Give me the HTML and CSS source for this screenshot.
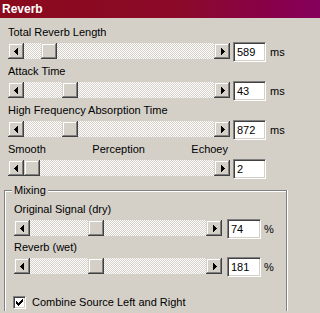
FILE: index.html
```html
<!DOCTYPE html>
<html>
<head>
<meta charset="utf-8">
<link rel="stylesheet" href="styles.css">
</head>
<body>
<div class="titlebar"><span class="title">Reverb</span></div>
<div class="main">
  <div class="row">
    <div class="label">Total Reverb Length</div>
    <div class="ctrl">
      <div class="scroll">
        <div class="btn btn-left"><svg width="4" height="7" viewBox="0 0 4 7"><path d="M3 0h1v7h-1v-1h-1v-1h-1v-1h-1v-1h1v-1h1v-1h1z"/></svg></div>
        <div class="track"><div class="thumb" style="margin-left:17px"></div></div>
        <div class="btn btn-right"><svg width="4" height="7" viewBox="0 0 4 7"><path d="M0 0h1v1h1v1h1v1h1v1h-1v1h-1v1h-1v1h-1z"/></svg></div>
      </div>
      <div class="edit">589</div>
      <div class="unit">ms</div>
    </div>
  </div>
  <div class="row">
    <div class="label">Attack Time</div>
    <div class="ctrl">
      <div class="scroll">
        <div class="btn btn-left"><svg width="4" height="7" viewBox="0 0 4 7"><path d="M3 0h1v7h-1v-1h-1v-1h-1v-1h-1v-1h1v-1h1v-1h1z"/></svg></div>
        <div class="track"><div class="thumb" style="margin-left:38px"></div></div>
        <div class="btn btn-right"><svg width="4" height="7" viewBox="0 0 4 7"><path d="M0 0h1v1h1v1h1v1h1v1h-1v1h-1v1h-1v1h-1z"/></svg></div>
      </div>
      <div class="edit">43</div>
      <div class="unit">ms</div>
    </div>
  </div>
  <div class="row">
    <div class="label">High Frequency Absorption Time</div>
    <div class="ctrl">
      <div class="scroll">
        <div class="btn btn-left"><svg width="4" height="7" viewBox="0 0 4 7"><path d="M3 0h1v7h-1v-1h-1v-1h-1v-1h-1v-1h1v-1h1v-1h1z"/></svg></div>
        <div class="track"><div class="thumb" style="margin-left:38px"></div></div>
        <div class="btn btn-right"><svg width="4" height="7" viewBox="0 0 4 7"><path d="M0 0h1v1h1v1h1v1h1v1h-1v1h-1v1h-1v1h-1z"/></svg></div>
      </div>
      <div class="edit">872</div>
      <div class="unit">ms</div>
    </div>
  </div>
  <div class="row">
    <div class="label ticks"><span>Smooth</span><span>Perception</span><span>Echoey</span></div>
    <div class="ctrl">
      <div class="scroll">
        <div class="btn btn-left"><svg width="4" height="7" viewBox="0 0 4 7"><path d="M3 0h1v7h-1v-1h-1v-1h-1v-1h-1v-1h1v-1h1v-1h1z"/></svg></div>
        <div class="track"><div class="thumb" style="margin-left:0px"></div></div>
        <div class="btn btn-right"><svg width="4" height="7" viewBox="0 0 4 7"><path d="M0 0h1v1h1v1h1v1h1v1h-1v1h-1v1h-1v1h-1z"/></svg></div>
      </div>
      <div class="edit">2</div>
    </div>
  </div>

  <div class="group">
    <div class="legend">Mixing</div>
    <div class="grow first">
      <div class="label">Original Signal (dry)</div>
      <div class="ctrl">
        <div class="scroll">
          <div class="btn btn-left"><svg width="4" height="7" viewBox="0 0 4 7"><path d="M3 0h1v7h-1v-1h-1v-1h-1v-1h-1v-1h1v-1h1v-1h1z"/></svg></div>
          <div class="track"><div class="thumb" style="margin-left:58px"></div></div>
          <div class="btn btn-right"><svg width="4" height="7" viewBox="0 0 4 7"><path d="M0 0h1v1h1v1h1v1h1v1h-1v1h-1v1h-1v1h-1z"/></svg></div>
        </div>
        <div class="edit">74</div>
        <div class="unit">%</div>
      </div>
    </div>
    <div class="grow">
      <div class="label">Reverb (wet)</div>
      <div class="ctrl">
        <div class="scroll">
          <div class="btn btn-left"><svg width="4" height="7" viewBox="0 0 4 7"><path d="M3 0h1v7h-1v-1h-1v-1h-1v-1h-1v-1h1v-1h1v-1h1z"/></svg></div>
          <div class="track"><div class="thumb" style="margin-left:58px"></div></div>
          <div class="btn btn-right"><svg width="4" height="7" viewBox="0 0 4 7"><path d="M0 0h1v1h1v1h1v1h1v1h-1v1h-1v1h-1v1h-1z"/></svg></div>
        </div>
        <div class="edit">181</div>
        <div class="unit">%</div>
      </div>
    </div>
    <div class="check">
      <div class="box"><svg width="7" height="7" viewBox="0 0 7 7"><path d="M6 0h1v1h-1zM5 1h2v1h-2zM0 2h1v1h-1zM4 2h3v1h-3zM0 3h2v1h-2zM3 3h3v1h-3zM0 4h5v1h-5zM1 5h3v1h-3zM2 6h1v1h-1z"/></svg></div>
      <span class="check-text">Combine Source Left and Right</span>
    </div>
  </div>
</div>
</body>
</html>
```
FILE: styles.css
```css
html {
  background: #d4d0c8;
}
html, body {
  margin: 0;
  padding: 0;
  height: 313px;
  overflow: hidden;
}
body {
  font-family: "Liberation Sans", Arial, sans-serif;
  font-size: 11px;
  color: #000;
  background: #d4d0c8;
}
.titlebar {
  height: 18px;
  background: linear-gradient(to right, #8a0a1c 0%, #8c0a28 55%, #88004a 85%, #85005c 100%);
  padding-left: 2px;
  display: flex;
  align-items: center;
}
.title {
  color: #fff;
  font-weight: bold;
  font-size: 12px;
  line-height: 14px;
}
.main {
  width: 279px;
  padding: 7px 0 0 8px;
}
.row {
  margin-bottom: 2px;
}
.label {
  height: 14px;
  line-height: 14px;
  white-space: nowrap;
}
.ticks {
  display: flex;
  justify-content: space-between;
  width: 220px;
}
.ctrl {
  margin-top: 3px;
  height: 20px;
  display: flex;
  align-items: flex-start;
}
.scroll {
  width: 222px;
  height: 16px;
  margin-top: 1px;
  display: flex;
}
.btn, .thumb {
  width: 16px;
  height: 16px;
  box-sizing: border-box;
  background: #d4d0c8;
  box-shadow: inset -1px -1px #404040, inset 1px 1px #d4d0c8, inset -2px -2px #808080, inset 2px 2px #fff;
  flex: none;
}
.btn {
  display: flex;
  align-items: center;
  justify-content: center;
}
.btn svg {
  display: block;
  shape-rendering: crispEdges;
}
.btn-left svg {
  margin-left: -1px;
}
.btn-right svg {
  margin-left: 1px;
}
.track {
  flex: 1;
  height: 16px;
  background-color: #fff;
  background-image: repeating-conic-gradient(#d4d0c8 0 25%, #fff 0 50%);
  background-size: 2px 2px;
}
.edit {
  margin-left: 3px;
  width: 33px;
  height: 20px;
  box-sizing: border-box;
  background: #fff;
  border: 1px solid;
  border-color: #808080 #fff #fff #808080;
  box-shadow: inset 1px 1px #404040, inset -1px -1px #d4d0c8;
  padding-left: 3px;
  line-height: 18px;
}
.unit {
  margin-left: 4px;
  line-height: 20px;
}
.group {
  margin: 11px 0 0 -4px;
  width: 272px;
  height: 120px;
  border: 1px solid #808080;
  border-bottom: none;
  box-shadow: inset 1px 1px #fff, 1px 0 #fff;
  padding-left: 9px;
}
.legend {
  width: fit-content;
  margin: -7px 0 0 -2px;
  padding: 0 2px;
  line-height: 13px;
  background: #d4d0c8;
}
.grow.first {
  margin-top: 5px;
}
.grow {
  margin-top: 1px;
}
.grow .scroll {
  width: 208px;
}
.grow .edit {
  margin-left: 5px;
  width: 34px;
}
.grow .unit {
  margin-left: 3px;
}
.check {
  margin: 19px 0 0 -1px;
  display: flex;
  align-items: center;
  height: 13px;
}
.box {
  width: 13px;
  height: 13px;
  box-sizing: border-box;
  background: #fff;
  border: 1px solid;
  border-color: #808080 #fff #fff #808080;
  box-shadow: inset 1px 1px #404040, inset -1px -1px #d4d0c8;
  display: flex;
  align-items: center;
  justify-content: center;
  flex: none;
}
.box svg {
  display: block;
  shape-rendering: crispEdges;
}
.check-text {
  margin-left: 6px;
  line-height: 13px;
  white-space: nowrap;
}
```
